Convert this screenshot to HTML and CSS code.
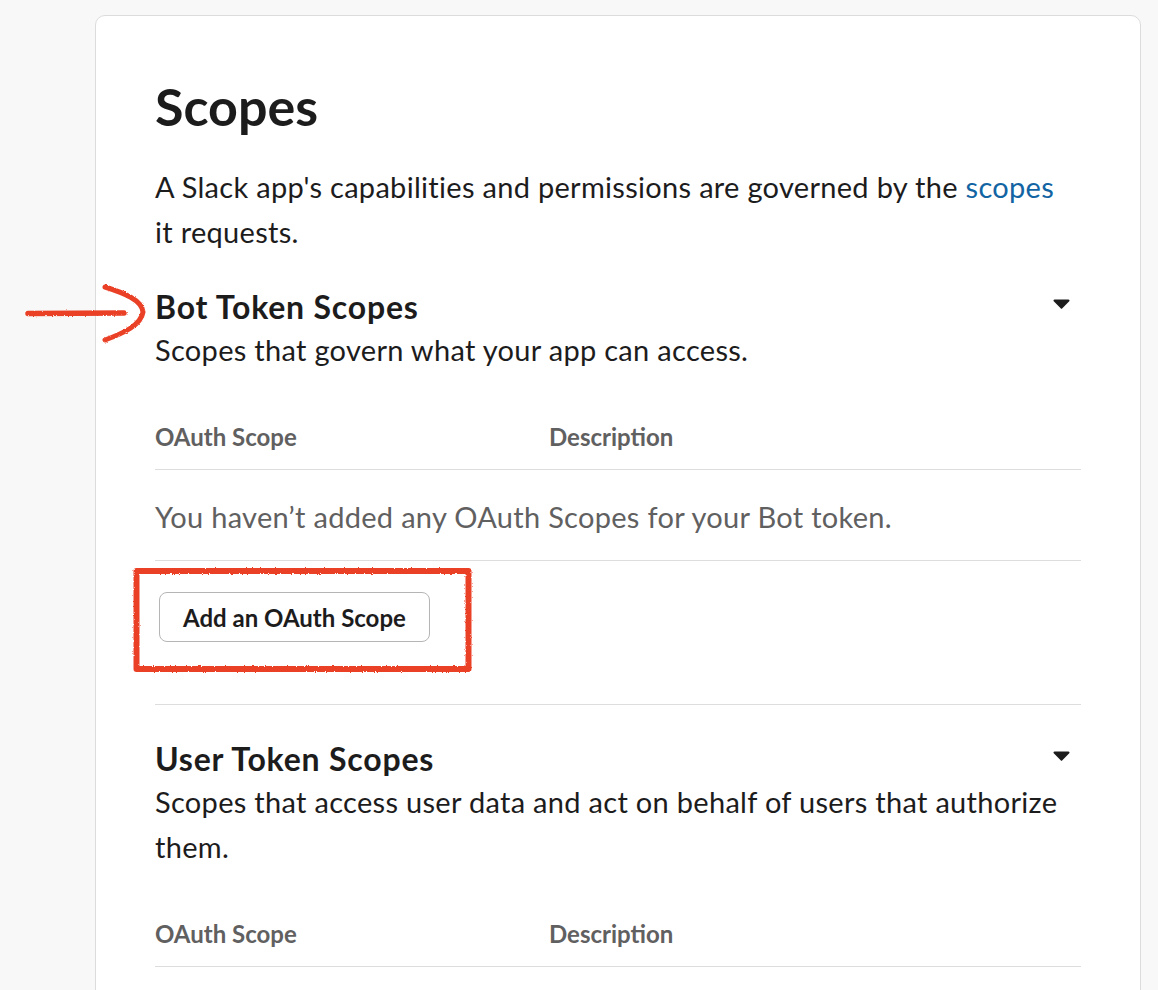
FILE: index.html
```html
<!DOCTYPE html>
<html lang="en">
<head>
<meta charset="utf-8">
<title>Scopes</title>
<link rel="stylesheet" href="styles.css">
</head>
<body>
<div class="page">
  <div class="card">
    <h1 class="title">Scopes</h1>
    <p class="intro">A Slack app's capabilities and permissions are governed by the <a class="link" href="#">scopes</a> it requests.</p>

    <section class="scope-section">
      <div class="section-head">
        <h2 class="section-title">Bot Token Scopes</h2>
        <span class="caret"><svg width="17" height="10" viewBox="0 0 17 10"><path d="M1.6 0.4H15.4a1.1 1.1 0 0 1 .85 1.8L9.35 9.3a1.1 1.1 0 0 1-1.7 0L0.75 2.2A1.1 1.1 0 0 1 1.6 0.4Z" fill="#1d1c1d"/></svg></span>
      </div>
      <p class="section-desc">Scopes that govern what your app can access.</p>
      <div class="table-head"><span>OAuth Scope</span><span>Description</span></div>
      <div class="empty-row">You haven’t added any OAuth Scopes for your Bot token.</div>
      <div class="actions"><button class="btn">Add an OAuth Scope</button></div>
    </section>

    <section class="scope-section second">
      <div class="section-head">
        <h2 class="section-title">User Token Scopes</h2>
        <span class="caret"><svg width="17" height="10" viewBox="0 0 17 10"><path d="M1.6 0.4H15.4a1.1 1.1 0 0 1 .85 1.8L9.35 9.3a1.1 1.1 0 0 1-1.7 0L0.75 2.2A1.1 1.1 0 0 1 1.6 0.4Z" fill="#1d1c1d"/></svg></span>
      </div>
      <p class="section-desc">Scopes that access user data and act on behalf of users that authorize them.</p>
      <div class="table-head"><span>OAuth Scope</span><span>Description</span></div>
      <div class="empty-row">You haven’t added any OAuth Scopes for your User token.</div>
      <div class="actions"><button class="btn">Add an OAuth Scope</button></div>
    </section>
  </div>

  <svg class="annotations" width="1158" height="990" viewBox="0 0 1158 990">
    <defs>
      <filter id="rough" x="-5%" y="-5%" width="110%" height="110%">
        <feTurbulence type="fractalNoise" baseFrequency="0.9" numOctaves="2" seed="3" result="n"/>
        <feDisplacementMap in="SourceGraphic" in2="n" scale="2.5" xChannelSelector="R" yChannelSelector="G"/>
      </filter>
    </defs>
    <g filter="url(#rough)" fill="none" stroke="#ea4128" stroke-linecap="round" stroke-linejoin="round">
      <path d="M28 313.5 L124 313" stroke-width="5.5"/>
      <path d="M105 287 C124 293 142 300 143 312 C141 325 124 333 105 340" stroke-width="5"/>
      <rect x="136.5" y="571" width="332" height="98" stroke-width="6"/>
    </g>
  </svg>
</div>
</body>
</html>
```

FILE: styles.css
```css
* {
  box-sizing: border-box;
}

body {
  margin: 0;
  background: #f8f8f8;
  font-family: Lato, "Open Sans", "Liberation Sans", sans-serif;
  color: #1d1c1d;
}

.page {
  position: relative;
  padding: 15px 17px 0 95px;
}

.card {
  background: #ffffff;
  border: 1px solid #dcdcdc;
  border-radius: 10px;
  padding: 59px 59px 60px;
}

.title {
  margin: 0;
  font-size: 52px;
  line-height: 62px;
  font-weight: 700;
}

.intro {
  margin: 27px 0 0;
  max-width: 910px;
  font-size: 29px;
  line-height: 45px;
  letter-spacing: 0.3px;
}

.link {
  color: #1264a3;
  text-decoration: none;
}

.scope-section {
  margin-top: 33px;
}

.scope-section.second {
  margin-top: 34px;
}

.section-head {
  display: flex;
  justify-content: space-between;
  align-items: flex-start;
}

.section-title {
  margin: 0;
  font-size: 32px;
  line-height: 40px;
  font-weight: 700;
  letter-spacing: 0.8px;
}

.caret {
  display: flex;
  margin: 12px 11px 0 0;
}

.section-desc {
  margin: 0;
  font-size: 29px;
  line-height: 45px;
  letter-spacing: 0.3px;
}

.table-head {
  margin-top: 50px;
  display: grid;
  grid-template-columns: 394px 1fr;
  font-size: 24px;
  line-height: 30px;
  font-weight: 700;
  color: #616061;
  padding-bottom: 17px;
  border-bottom: 1px solid #dddddd;
}

.empty-row {
  padding: 24px 0 21px;
  border-bottom: 1px solid #dddddd;
  font-size: 29px;
  line-height: 45px;
  letter-spacing: 0.3px;
  color: #616061;
}

.actions {
  padding: 31px 0 62px;
  border-bottom: 1px solid #dddddd;
}

.btn {
  display: block;
  margin-left: 4px;
  height: 50px;
  padding: 0 23px;
  background: #ffffff;
  border: 1px solid #b5b5b5;
  border-radius: 8px;
  font-family: inherit;
  font-size: 24px;
  font-weight: 700;
  color: #1d1c1d;
}

.annotations {
  position: absolute;
  left: 0;
  top: 0;
  pointer-events: none;
}
```
